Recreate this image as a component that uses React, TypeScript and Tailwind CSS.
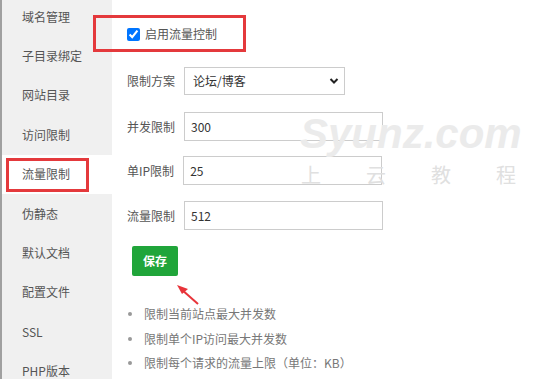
import React from 'react';

const menu = ['域名管理', '子目录绑定', '网站目录', '访问限制', '流量限制', '伪静态', '默认文档', '配置文件', 'SSL', 'PHP版本'];

const tips = ['限制当前站点最大并发数', '限制单个IP访问最大并发数', '限制每个请求的流量上限（单位：KB）'];

const Field: React.FC<{ label: string; value: string; className?: string }> = ({ label, value, className }) => (
  <div className={`flex items-center ${className ?? ''}`}>
    <span className="mr-[9px] text-[12px] text-[#555]">{label}</span>
    <input
      defaultValue={value}
      className="h-[29px] w-[199px] border border-[#ccc] bg-transparent px-[6px] text-[12px] text-[#333] outline-none"
    />
  </div>
);

const App: React.FC = () => {
  return (
    <div
      className="relative flex h-[379px] w-[546px] overflow-hidden bg-white"
      style={{ fontFamily: '"Noto Sans CJK SC", "Noto Sans", sans-serif' }}
    >
      {/* sidebar */}
      <div className="w-[112px] shrink-0 border-l-2 border-[#a0a0a0] bg-[#f0f0f0]">
        <div className="-mt-[3px]">
          {menu.map((m) => (
            <div
              key={m}
              className={`flex h-[39.4px] items-center pl-[20px] text-[12px] text-[#555] ${
                m === '流量限制' ? 'bg-white' : ''
              }`}
            >
              {m}
            </div>
          ))}
        </div>
      </div>

      {/* content */}
      <div className="flex-1 pl-[15px] pt-[24px]">
        <label className="flex h-[20px] items-center">
          <input type="checkbox" defaultChecked className="m-0 h-[13px] w-[13px] accent-[#0075ff]" />
          <span className="ml-[5px] text-[12px] text-[#555]">启用流量控制</span>
        </label>

        <div className="mt-[23px] flex items-center">
          <span className="mr-[9px] text-[12px] text-[#555]">限制方案</span>
          <div className="relative">
            <select
              defaultValue="bbs"
              className="h-[28px] w-[161px] appearance-none border border-[#ccc] bg-white pl-[8px] text-[12px] text-[#333] outline-none"
            >
              <option value="bbs">论坛/博客</option>
            </select>
            <svg
              className="pointer-events-none absolute right-[6px] top-[10px]"
              width="10"
              height="8"
              viewBox="0 0 10 8"
            >
              <path d="M1.5 2 L5 5.5 L8.5 2" fill="none" stroke="#222" strokeWidth="2" />
            </svg>
          </div>
        </div>

        <Field label="并发限制" value="300" className="mt-[17px]" />
        <Field label="单IP限制" value="25" className="mt-[15px]" />
        <Field label="流量限制" value="512" className="mt-[16px]" />

        <button className="ml-[5px] mt-[16px] h-[30px] w-[46px] rounded-[2px] bg-[#20a53a] text-[12px] font-bold text-white">
          保存
        </button>

        <ul className="mt-[26px]">
          {tips.map((t) => (
            <li key={t} className="flex h-[24.5px] items-center text-[12px] text-[#777]">
              <span className="ml-[1px] mr-[12px] h-[4px] w-[4px] rounded-full bg-[#999]" />
              {t}
            </li>
          ))}
        </ul>
      </div>

      {/* annotations */}
      <div className="pointer-events-none absolute left-[6px] top-[158px] h-[34px] w-[83px] border-[3px] border-[#e4393c]" />
      <div className="pointer-events-none absolute left-[93px] top-[15px] h-[37px] w-[153px] border-[3px] border-[#e4393c]" />
      <svg className="pointer-events-none absolute left-0 top-0" width="546" height="379">
        <line x1="198" y1="304" x2="181" y2="289" stroke="#e8343a" strokeWidth="2" />
        <path d="M177 285 L188 289 L182 294 Z" fill="#e8343a" />
      </svg>

      {/* watermark */}
      <div className="pointer-events-none absolute left-[300px] top-[113px] text-[42px] font-bold italic leading-none text-[#ebebeb]"
        style={{ fontFamily: '"Liberation Sans", Arial, sans-serif' }}>
        Syunz.com
      </div>
      <div className="pointer-events-none absolute left-[301px] top-[165px] flex gap-[45px] text-[20px] leading-none text-[#e0e0e0]">
        <span>上</span>
        <span>云</span>
        <span>教</span>
        <span>程</span>
      </div>
    </div>
  );
};

export default App;
